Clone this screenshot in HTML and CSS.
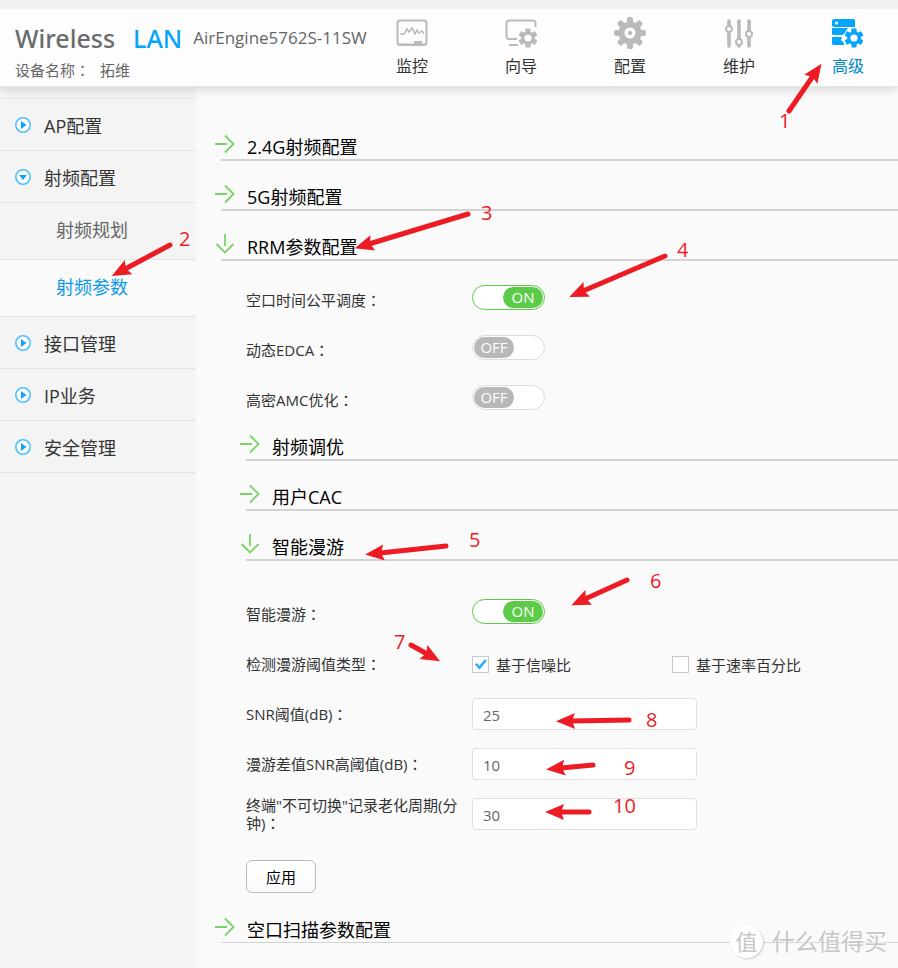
FILE: index.html
```html
<!DOCTYPE html>
<html lang="zh-CN">
<head>
  <meta charset="UTF-8">
  <meta name="viewport" content="width=device-width, initial-scale=1">
  <title>Wireless LAN</title>
  <link rel="stylesheet" href="styles.css">
</head>
<body>
  <svg class="symbols" aria-hidden="true">
    <symbol id="gear" viewBox="-16 -16 32 32">
      <g fill="currentColor">
        <rect x="-3" y="-16" width="6" height="32" rx="2"/>
        <rect x="-3" y="-16" width="6" height="32" rx="2" transform="rotate(45)"/>
        <rect x="-3" y="-16" width="6" height="32" rx="2" transform="rotate(90)"/>
        <rect x="-3" y="-16" width="6" height="32" rx="2" transform="rotate(135)"/>
        <circle r="11.5"/>
      </g>
      <circle r="5.5" fill="#fff"/>
      <circle r="2.2" fill="currentColor"/>
    </symbol>
    <symbol id="small-gear" viewBox="-10 -10 20 20">
      <g fill="currentColor">
        <rect x="-2.6" y="-9.5" width="5.2" height="19" rx="1"/>
        <rect x="-2.6" y="-9.5" width="5.2" height="19" rx="1" transform="rotate(60)"/>
        <rect x="-2.6" y="-9.5" width="5.2" height="19" rx="1" transform="rotate(120)"/>
        <circle r="6.8"/>
      </g>
      <circle r="3.6" fill="#fff"/>
    </symbol>
    <symbol id="play" viewBox="0 0 16 16">
      <circle cx="8" cy="8" r="7.2" fill="#fff" stroke="#4fc0ff" stroke-width="1.6"/>
      <path d="M6 4L11.5 8L6 12Z" fill="#0aa5ff"/>
    </symbol>
    <symbol id="play-down" viewBox="0 0 16 16">
      <circle cx="8" cy="8" r="7.2" fill="#fff" stroke="#4fc0ff" stroke-width="1.6"/>
      <path d="M4 6H12L8 11Z" fill="#0aa5ff"/>
    </symbol>
    <symbol id="arrow" viewBox="0 0 20 20">
      <path d="M0 10H12M10 1.5L18.5 10L10 18.5" fill="none" stroke="#77d565" stroke-width="1.8"/>
    </symbol>
  </svg>

  <header class="header">
    <div class="brand">
      <div class="brand-line">
        <span class="logo">Wireless</span>
        <span class="logo logo-blue">LAN</span>
        <span class="model">AirEngine5762S-11SW</span>
      </div>
      <div class="device"><span>设备名称<span class="colon" lang="zh-TW">：</span></span><span>拓维</span></div>
    </div>
    <nav class="top-nav">
      <a href="#monitor">
        <svg viewBox="0 0 32 32" fill="none" stroke="currentColor">
          <rect x="1.5" y="3.500" width="29" height="24.500" rx="2.500" stroke-width="2"/>
          <path d="M4 17H8L11 12L13 15L16 11L19 17L21 13L23 16L26 14L28 17" stroke-width="1.500"/>
          <path d="M18 25.500H26" stroke-width="3"/>
          <path d="M2 27.500H30" stroke-width="2"/>
        </svg>
        监控
      </a>
      <a href="#wizard">
        <svg viewBox="0 0 32 32">
          <path d="M12 22H4Q1.500 22 1.500 19.500V6Q1.500 3.500 4 3.500H28Q30.500 3.500 30.500 6V10M4 28H13" fill="none" stroke="currentColor" stroke-width="2"/>
          <use href="#small-gear" x="13" y="11" width="20" height="20"/>
        </svg>
        向导
      </a>
      <a href="#config">
        <svg viewBox="0 0 32 32"><use href="#gear" width="32" height="32"/></svg>
        配置
      </a>
      <a href="#maintain">
        <svg viewBox="0 0 32 32" stroke="currentColor" fill="#fff">
          <path d="M6 4V29M16 4V29M26 4V29" stroke-width="3.600" stroke-linecap="round"/>
          <circle cx="6" cy="12" r="3" stroke-width="2"/>
          <circle cx="16" cy="25" r="3" stroke-width="2"/>
          <circle cx="26" cy="17" r="3" stroke-width="2"/>
        </svg>
        维护
      </a>
      <a href="#advanced" class="current">
        <svg viewBox="0 0 32 32">
          <path d="M2 2H22L23 3V10H2L0 9V3ZM0 11H16L12 17L10 18H1L0 17ZM0 20H10L9 23L12 26V28H1L0 27Z" fill="#05a5fb"/>
          <circle cx="4.500" cy="6" r="1.600" fill="#fff"/>
          <use href="#small-gear" x="12" y="11" width="20" height="20"/>
        </svg>
        高级
      </a>
    </nav>
  </header>

  <div class="page">
    <aside class="sidebar">
      <a class="menu" href="#ap"><svg><use href="#play"/></svg>AP配置</a>
      <a class="menu" href="#radio"><svg><use href="#play-down"/></svg>射频配置</a>
      <a class="submenu" href="#plan">射频规划</a>
      <a class="submenu active" href="#params">射频参数</a>
      <a class="menu" href="#interface"><svg><use href="#play"/></svg>接口管理</a>
      <a class="menu" href="#ip"><svg><use href="#play"/></svg>IP业务</a>
      <a class="menu" href="#security"><svg><use href="#play"/></svg>安全管理</a>
    </aside>

    <main class="content">
      <h2 class="section"><svg><use href="#arrow"/></svg>2.4G射频配置</h2>
      <h2 class="section"><svg><use href="#arrow"/></svg>5G射频配置</h2>
      <h2 class="section open"><svg><use href="#arrow"/></svg>RRM参数配置</h2>

      <div class="rrm">
        <div class="row">
          <label class="name" for="airtime">空口时间公平调度<span class="colon" lang="zh-TW">：</span></label>
          <label class="switch"><input type="checkbox" id="airtime" checked><span class="track"><span class="on">ON</span><span class="off">OFF</span></span></label>
        </div>
        <div class="row">
          <label class="name" for="edca">动态EDCA<span class="colon" lang="zh-TW">：</span></label>
          <label class="switch"><input type="checkbox" id="edca"><span class="track"><span class="on">ON</span><span class="off">OFF</span></span></label>
        </div>
        <div class="row">
          <label class="name" for="amc">高密AMC优化<span class="colon" lang="zh-TW">：</span></label>
          <label class="switch"><input type="checkbox" id="amc"><span class="track"><span class="on">ON</span><span class="off">OFF</span></span></label>
        </div>

        <h3 class="section"><svg><use href="#arrow"/></svg>射频调优</h3>
        <h3 class="section"><svg><use href="#arrow"/></svg>用户CAC</h3>
        <h3 class="section open"><svg><use href="#arrow"/></svg>智能漫游</h3>

        <form class="roaming" onsubmit="return false">
          <div class="row">
            <label class="name" for="roam">智能漫游<span class="colon" lang="zh-TW">：</span></label>
            <label class="switch"><input type="checkbox" id="roam" checked><span class="track"><span class="on">ON</span><span class="off">OFF</span></span></label>
          </div>
          <div class="row">
            <span class="name">检测漫游阈值类型<span class="colon" lang="zh-TW">：</span></span>
            <div class="checks">
              <label><input type="checkbox" checked>基于信噪比</label>
              <label><input type="checkbox">基于速率百分比</label>
            </div>
          </div>
          <div class="row">
            <label class="name" for="snr">SNR阈值(dB)<span class="colon" lang="zh-TW">：</span></label>
            <input class="text" type="text" id="snr" value="25">
          </div>
          <div class="row">
            <label class="name" for="snr-high">漫游差值SNR高阈值(dB)<span class="colon" lang="zh-TW">：</span></label>
            <input class="text" type="text" id="snr-high" value="10">
          </div>
          <div class="row">
            <label class="name" for="aging">终端"不可切换"记录老化周期(分钟)<span class="colon" lang="zh-TW">：</span></label>
            <input class="text" type="text" id="aging" value="30">
          </div>
          <button class="apply" type="submit">应用</button>
        </form>
      </div>

      <h2 class="section last"><svg><use href="#arrow"/></svg>空口扫描参数配置</h2>
    </main>
  </div>

  <!-- step marks over the page -->
  <svg class="marks" width="898" height="968">
    <defs>
      <marker id="head" markerUnits="userSpaceOnUse" markerWidth="24" markerHeight="20" refX="5" refY="10" orient="auto" overflow="visible">
        <path d="M1 2L20 10L1 18L4 10Z" fill="#ed1c24"/>
      </marker>
    </defs>
    <g class="pointers">
      <line x1="789" y1="111" x2="813" y2="76"/>
      <line x1="170" y1="245" x2="125" y2="269"/>
      <line x1="468" y1="214" x2="369" y2="244"/>
      <line x1="665" y1="256" x2="583" y2="291"/>
      <line x1="446" y1="546" x2="380" y2="553"/>
      <line x1="627" y1="580" x2="585" y2="599"/>
      <line x1="411" y1="645" x2="427" y2="654"/>
      <line x1="629" y1="720" x2="571" y2="721"/>
      <line x1="593" y1="765" x2="561" y2="768"/>
      <line x1="589" y1="812" x2="560" y2="812"/>
    </g>
    <g class="numbers">
      <text x="779" y="128">1</text>
      <text x="179" y="246">2</text>
      <text x="481" y="220">3</text>
      <text x="677" y="257">4</text>
      <text x="469" y="547">5</text>
      <text x="650" y="588">6</text>
      <text x="394" y="649">7</text>
      <text x="646" y="727">8</text>
      <text x="624" y="775">9</text>
      <text x="613" y="813">10</text>
    </g>
  </svg>

  <div class="watermark"><span class="stamp">值</span>什么值得买</div>
</body>
</html>
```

FILE: styles.css
```css
* {
  box-sizing: border-box;
}
body {
  position: relative;
  display: flex;
  flex-direction: column;
  min-height: 100vh;
  margin: 0;
  background: #fafafa;
  color: #333;
  font-family: "Open Sans", "Noto Sans CJK SC", sans-serif;
  font-size: 15px;
}
a {
  color: inherit;
  text-decoration: none;
}
.symbols {
  position: absolute;
  width: 0;
  height: 0;
}
/* the TC face centres the full-width colon */
.colon {
  display: inline-block;
  font-family: "Noto Sans CJK TC", sans-serif;
  line-height: 18px;
}

/* header */
.header {
  display: flex;
  justify-content: space-between;
  height: 87px;
  padding: 0 34px 0 15px;
  border-top: 9px solid #f1f1f1;
  border-bottom: 1px solid #e6e6e6;
  background: #fdfdfd;
  box-shadow: 0 2px 10px rgba(0, 0, 0, 0.16);
  z-index: 1;
}
.brand {
  padding-top: 9px;
  color: #666;
  white-space: nowrap;
}
.brand-line {
  display: flex;
  align-items: center;
  height: 40px;
  line-height: 38px;
}
.logo {
  margin-right: 18px;
  color: #6b6b6b;
  font-family: "Noto Sans", sans-serif;
  font-size: 25px;
  font-weight: 500;
}
.logo-blue {
  margin-right: 11px;
  color: #05a5fb;
}
.model {
  font-size: 17px;
}
.device {
  display: flex;
  gap: 10px;
  line-height: 24px;
}
.top-nav {
  display: flex;
  gap: 77px;
  padding-top: 8px;
}
.top-nav a {
  width: 32px;
  font-size: 16px;
  line-height: 34px;
  white-space: nowrap;
}
.top-nav svg {
  display: block;
  width: 32px;
  height: 32px;
  color: #bababa;
}
.top-nav .current {
  color: #0088cf;
}
.top-nav .current svg {
  color: #05a5fb;
}

/* sidebar */
.page {
  display: flex;
  flex: 1;
}
.sidebar {
  width: 196px;
  flex-shrink: 0;
  padding-top: 11px;
  background: #f4f4f4;
}
.menu, .submenu {
  display: flex;
  align-items: center;
  height: 52px;
  border-top: 1px solid #e4e4e4;
  font-size: 18px;
}
.menu svg {
  width: 16px;
  height: 16px;
  margin: 0 13px 0 15px;
}
.menu:last-child {
  height: 53px;
  border-bottom: 1px solid #e4e4e4;
}
.submenu {
  height: 57px;
  padding: 0 0 4px 56px;
  color: #666;
}
.submenu.active {
  background: #fafafa;
  color: #0a98e8;
}

/* content */
.content {
  flex: 1;
  min-width: 0;
  padding: 36px 0 0 25px;
}
.section {
  display: flex;
  align-items: center;
  height: 38px;
  margin: 0 0 12px;
  padding-top: 10px;
  border-bottom: 2px solid #d3d3d3;
  color: #000;
  font-size: 18px;
  font-weight: normal;
}
.section svg {
  width: 20px;
  height: 20px;
  margin: 0 12px 4px -6px;
}
.section.open svg {
  transform: rotate(90deg);
}
.section.last {
  border-bottom-width: 1px;
}
.rrm {
  padding: 2px 0 12px 25px;
}
.rrm h3:first-of-type {
  margin-top: -2px;
}
.roaming {
  padding-top: 16px;
}
.row {
  display: flex;
  align-items: center;
  height: 50px;
}
.name {
  width: 218px;
  margin-right: 8px;
  line-height: 18px;
}
.switch {
  position: relative;
  margin-bottom: 6px;
}
.switch input {
  position: absolute;
  inset: 0;
  margin: 0;
  opacity: 0;
  cursor: pointer;
}
.track {
  display: flex;
  width: 73px;
  height: 25px;
  padding: 1px;
  border: 1px solid #dcdcdc;
  border-radius: 13px;
  background: #fff;
  color: #fff;
  line-height: 20px;
  text-align: center;
}
.on, .off {
  width: 40px;
  border-radius: 11px;
}
.on {
  display: none;
  background: #5ccb48;
}
.off {
  background: #b8b8b8;
}
.switch input:checked + .track {
  justify-content: flex-end;
  border: 1px solid #5ccb48;
}
.switch input:checked + .track .on {
  display: block;
}
.switch input:checked + .track .off {
  display: none;
}
.checks {
  display: flex;
}
.checks label {
  display: flex;
  align-items: center;
  width: 200px;
}
.checks input {
  appearance: none;
  width: 17px;
  height: 17px;
  margin: 0 7px 0 0;
  border: 1px solid #c8c8c8;
  background: #fff;
}
.checks input:checked::after {
  content: "";
  display: block;
  width: 15px;
  height: 15px;
  background: #2eb0fb;
  clip-path: polygon(12% 54%, 26% 44%, 42% 62%, 78% 18%, 92% 28%, 44% 88%);
}
.text {
  width: 225px;
  height: 32px;
  padding: 2px 10px 0;
  border: 1px solid #e0e0e0;
  border-radius: 4px;
  background: #fff;
  color: #666;
  font: inherit;
}
.apply {
  display: block;
  width: 70px;
  height: 33px;
  margin-top: 21px;
  border: 1px solid #bbb;
  border-radius: 6px;
  background: linear-gradient(#fff, #fafafa);
  color: #000;
  font: inherit;
}

/* overlays */
.marks {
  position: absolute;
  top: 0;
  left: 0;
  z-index: 2;
  pointer-events: none;
}
.pointers line {
  stroke: #ed1c24;
  stroke-width: 5px;
  stroke-linecap: round;
  marker-end: url(#head);
}
.numbers {
  fill: #ed1c24;
  font-size: 20px;
}
.watermark {
  position: absolute;
  right: 11px;
  bottom: 10px;
  display: flex;
  align-items: center;
  gap: 9px;
  height: 34px;
  color: #c6c6c6;
  font-size: 23px;
  line-height: 32px;
  text-shadow: -1px -1px 1px #fff;
}
.stamp {
  width: 33px;
  height: 33px;
  border-radius: 50%;
  background: #fff;
  box-shadow: 1px 1px 2px #ccc;
  font-size: 22px;
  line-height: 32px;
  text-align: center;
}
```
